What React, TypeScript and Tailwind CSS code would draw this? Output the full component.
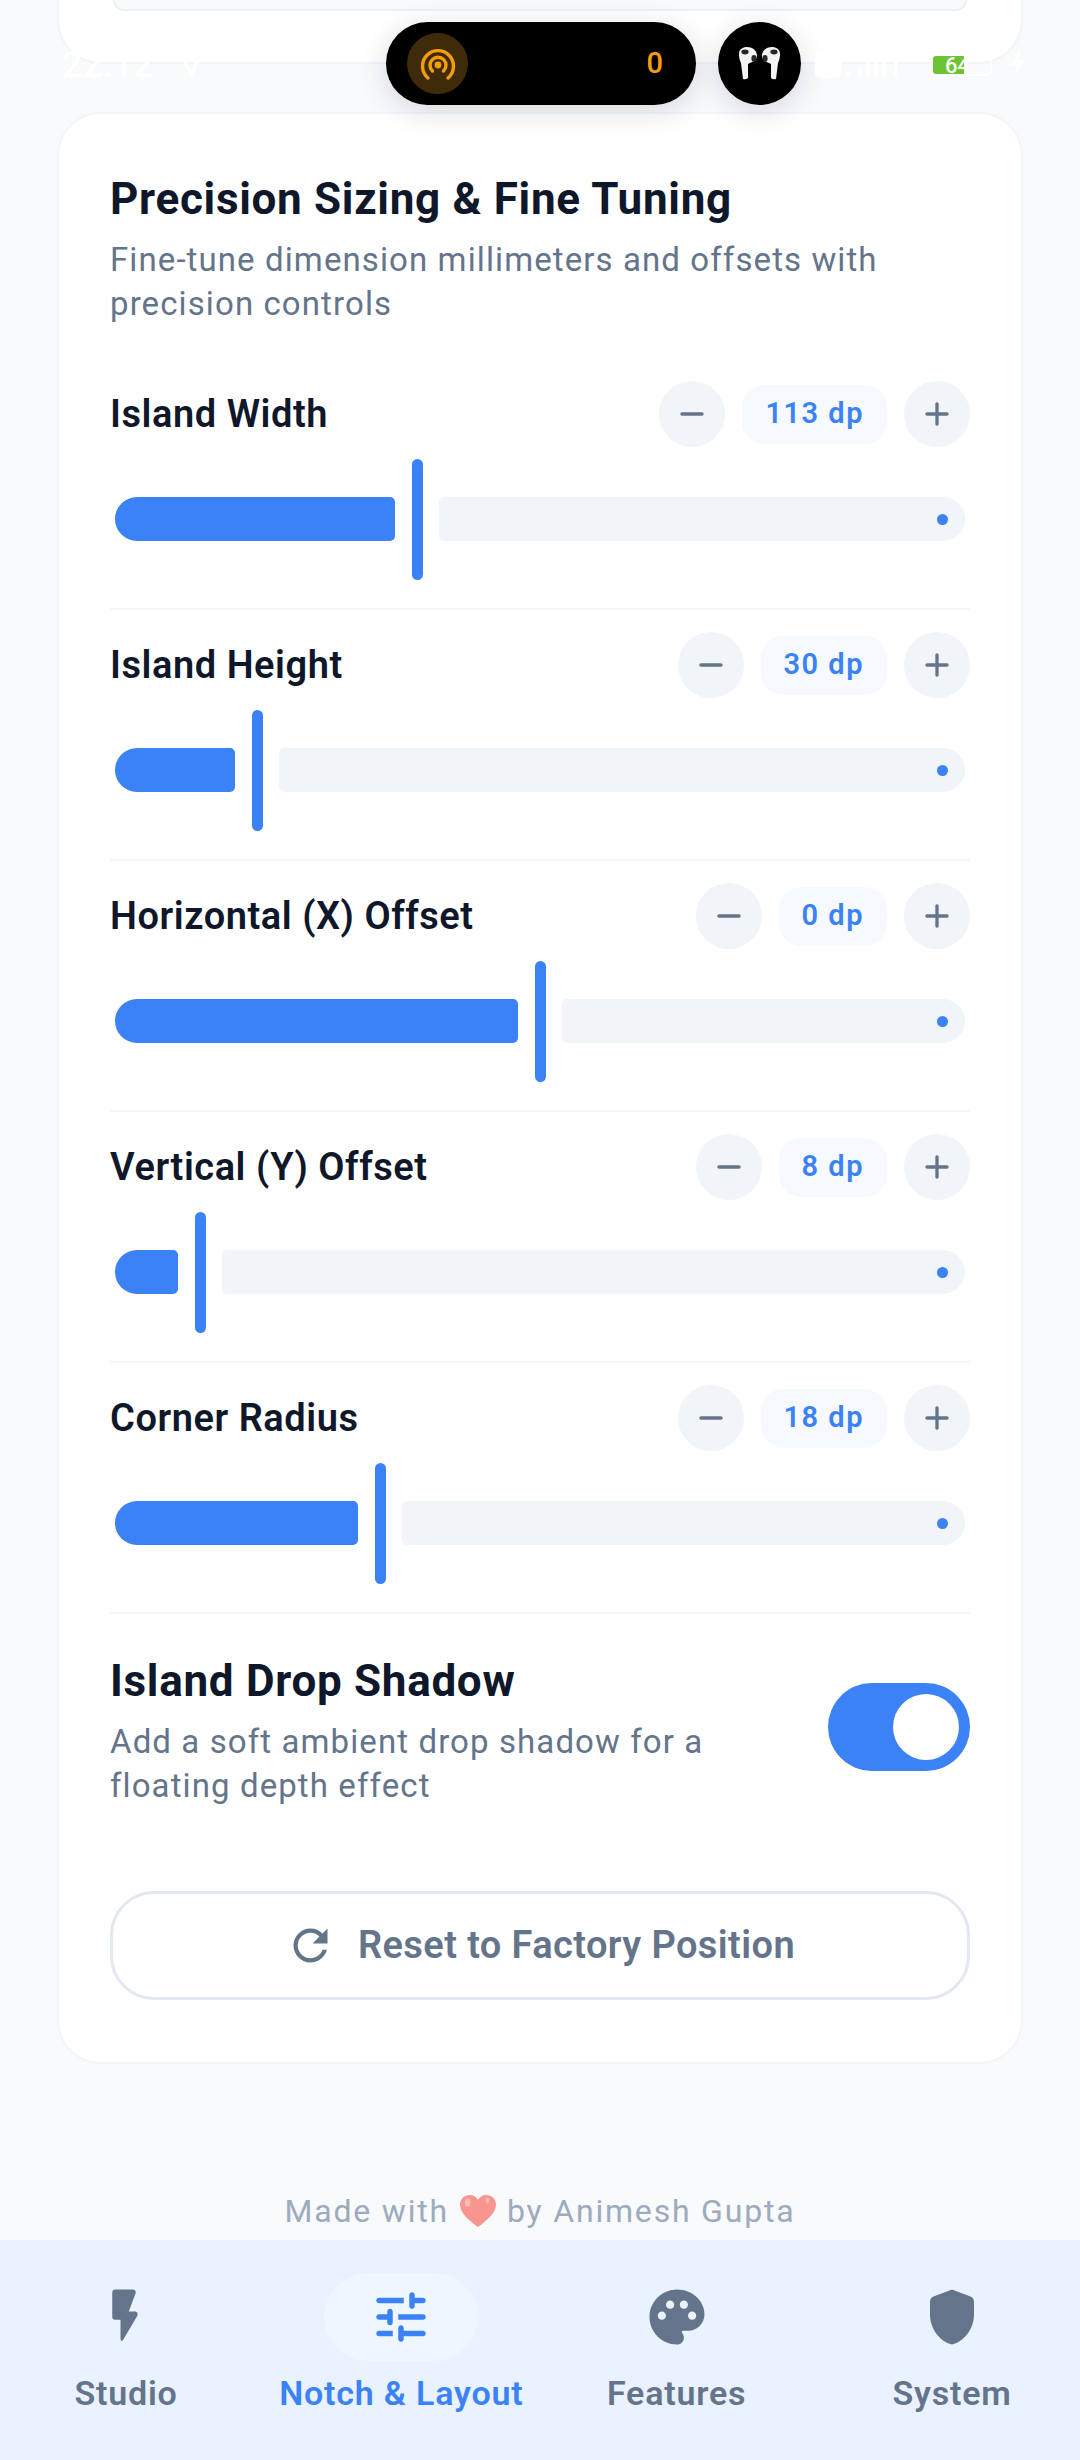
const font = "font-['Roboto',sans-serif]";

type Row = { label: string; value: string; fill: string };

const rows: Row[] = [
  { label: 'Island Width', value: '113 dp', fill: 'w-[280px]' },
  { label: 'Island Height', value: '30 dp', fill: 'w-[120px]' },
  { label: 'Horizontal (X) Offset', value: '0 dp', fill: 'w-[403px]' },
  { label: 'Vertical (Y) Offset', value: '8 dp', fill: 'w-[63px]' },
  { label: 'Corner Radius', value: '18 dp', fill: 'w-[243px]' },
];

const Icon = ({ d, className }: { d: string; className: string }) => (
  <svg viewBox="0 0 24 24" fill="currentColor" className={className}>
    <path d={d} />
  </svg>
);

const paths = {
  minus: 'M18 13H6c-.55 0-1-.45-1-1s.45-1 1-1h12c.55 0 1 .45 1 1s-.45 1-1 1z',
  plus: 'M18 13h-5v5c0 .55-.45 1-1 1s-1-.45-1-1v-5H6c-.55 0-1-.45-1-1s.45-1 1-1h5V6c0-.55.45-1 1-1s1 .45 1 1v5h5c.55 0 1 .45 1 1s-.45 1-1 1z',
  refresh:
    'M17.65 6.35C16.2 4.9 14.21 4 12 4c-4.42 0-7.99 3.58-7.99 8s3.57 8 7.99 8c3.73 0 6.84-2.55 7.73-6h-2.08c-.82 2.33-3.04 4-5.65 4-3.31 0-6-2.69-6-6s2.69-6 6-6c1.66 0 3.14.69 4.22 1.78L13 11h7V4l-2.35 2.35z',
  bolt: 'M7 3v9c0 .55.45 1 1 1h2v7.15c0 .51.67.69.93.25l5.19-8.9c.39-.67-.09-1.5-.86-1.5H13l2.49-6.65c.25-.65-.23-1.35-.93-1.35H8c-.55 0-1 .45-1 1z',
  tune: 'M3 18c0 .55.45 1 1 1h5v-2H4c-.55 0-1 .45-1 1zM3 6c0 .55.45 1 1 1h9V5H4c-.55 0-1 .45-1 1zm10 14v-1h7c.55 0 1-.45 1-1s-.45-1-1-1h-7v-1c0-.55-.45-1-1-1s-1 .45-1 1v4c0 .55.45 1 1 1s1-.45 1-1zM7 10v1H4c-.55 0-1 .45-1 1s.45 1 1 1h3v1c0 .55.45 1 1 1s1-.45 1-1v-4c0-.55-.45-1-1-1s-1 .45-1 1zm14 2c0-.55-.45-1-1-1h-9v2h9c.55 0 1-.45 1-1zm-5-3c.55 0 1-.45 1-1V7h3c.55 0 1-.45 1-1s-.45-1-1-1h-3V4c0-.55-.45-1-1-1s-1 .45-1 1v4c0 .55.45 1 1 1z',
  palette:
    'M12 2C6.49 2 2 6.49 2 12s4.49 10 10 10c1.38 0 2.5-1.12 2.5-2.5 0-.61-.23-1.2-.64-1.67-.08-.1-.13-.21-.13-.33 0-.28.22-.5.5-.5H16c3.31 0 6-2.69 6-6 0-4.96-4.49-9-10-9zm5.5 11c-.83 0-1.5-.67-1.5-1.5s.67-1.5 1.5-1.5 1.5.67 1.5 1.5-.67 1.5-1.5 1.5zm-3-4c-.83 0-1.5-.67-1.5-1.5S13.67 6 14.5 6s1.5.67 1.5 1.5S15.33 9 14.5 9zM5 11.5c0-.83.67-1.5 1.5-1.5S8 10.67 8 11.5 7.33 13 6.5 13 5 12.33 5 11.5zm6-4c0 .83-.67 1.5-1.5 1.5S8 8.33 8 7.5 8.67 6 9.5 6s1.5.67 1.5 1.5z',
  shield:
    'M11.3 2.26l-6 2.25C4.52 4.81 4 5.55 4 6.39v4.71c0 5.05 3.41 9.76 8 10.91 4.59-1.15 8-5.86 8-10.91V6.39c0-.83-.52-1.58-1.3-1.87l-6-2.25c-.45-.18-.95-.18-1.4-.01z',
};

const tabs = [
  { label: 'Studio', d: paths.bolt },
  { label: 'Notch & Layout', d: paths.tune, active: true },
  { label: 'Features', d: paths.palette },
  { label: 'System', d: paths.shield },
];

const SliderRow = ({ label, value, fill }: Row) => (
  <div className="border-b-2 border-[#f5f7fa] pt-[22px] pb-[28px]">
    <div className="flex items-center justify-between">
      <span className="text-[38px] font-semibold leading-none tracking-[0.55px] text-[#0f172a]">{label}</span>
      <div className="flex items-center gap-[17px]">
        <div className="flex h-[66px] w-[66px] items-center justify-center rounded-full bg-[#f1f5f9] text-[#64748b]">
          <Icon d={paths.minus} className="h-[40px] w-[40px]" />
        </div>
        <div className="flex h-[59px] items-center rounded-[22px] bg-[#f6faff] px-[23px] text-[29px] font-semibold tracking-[1.5px] text-[#3b82f6]">
          {value}
        </div>
        <div className="flex h-[66px] w-[66px] items-center justify-center rounded-full bg-[#f1f5f9] text-[#64748b]">
          <Icon d={paths.plus} className="h-[40px] w-[40px]" />
        </div>
      </div>
    </div>
    <div className="mt-[12px] flex h-[121px] items-start px-[5px]">
      <div className={`mt-[38px] h-[44px] shrink-0 rounded-l-[22px] rounded-r-[5px] bg-[#3b82f6] ${fill}`} />
      <div className="mx-[16.5px] h-[121px] w-[11px] shrink-0 rounded-full bg-[#3b82f6]" />
      <div className="mt-[38px] flex h-[44px] flex-1 items-center justify-end rounded-l-[5px] rounded-r-[22px] bg-[#f1f5f9] pr-[17px]">
        <div className="h-[11px] w-[11px] rounded-full bg-[#3b82f6]" />
      </div>
    </div>
  </div>
);

const StatusBar = () => (
  <div className="absolute inset-x-0 top-0 h-[110px]">
    <div className="absolute left-[62px] top-[44px] flex items-center gap-[26px] text-[36px] font-medium leading-[42px] text-white">
      22:12
      <svg viewBox="0 0 24 24" className="h-[26px] w-[24px]" fill="none" stroke="white" strokeWidth="3">
        <path d="M3 3 L12 22 L21 3" />
      </svg>
    </div>
    <div className="absolute left-[386px] top-[22px] flex h-[83px] w-[310px] items-center justify-between rounded-full bg-black pl-[21px] pr-[33px] shadow-[0_6px_30px_rgba(15,23,42,0.14)]">
      <div className="flex h-[61px] w-[61px] items-center justify-center rounded-full bg-[#3f2b0a]">
        <svg viewBox="0 0 36 34" className="h-[34px] w-[36px]" fill="none" stroke="#f59e0b" strokeWidth="3.4" strokeLinecap="round">
          <path d="M8 31 A15.5 15.5 0 1 1 28 31" />
          <path d="M12.5 24 A8 8 0 1 1 23.5 24" />
          <circle cx="18" cy="18" r="3.4" fill="#f59e0b" stroke="none" />
        </svg>
      </div>
      <span className="text-[29px] font-medium leading-none text-[#f59e0b]">0</span>
    </div>
    <div className="absolute left-[718px] top-[22px] flex h-[83px] w-[83px] items-center justify-center rounded-full bg-black shadow-[0_6px_30px_rgba(15,23,42,0.14)]">
      <svg viewBox="0 0 43 33" className="h-[33px] w-[43px]">
        <path d="M1 7 C1 2 5 0 9 0 C14 0 19 3 19 9 C19 13 15 15 12 16 L10 17 L10 31 Q8 33 5 32 L3 16 C1.5 13 1 10 1 7 Z" fill="#f4f4f5" />
        <path d="M42 7 C42 2 38 0 34 0 C29 0 24 3 24 9 C24 13 28 15 31 16 L33 17 L33 31 Q35 33 38 32 L40 16 C41.5 13 42 10 42 7 Z" fill="#f4f4f5" />
        <ellipse cx="7" cy="5" rx="3.6" ry="2.4" fill="#27272a" />
        <ellipse cx="36" cy="5" rx="3.6" ry="2.4" fill="#27272a" />
        <ellipse cx="16" cy="11.5" rx="2.6" ry="3.4" fill="#27272a" />
        <ellipse cx="27" cy="11.5" rx="2.6" ry="3.4" fill="#27272a" />
      </svg>
    </div>
    <svg viewBox="0 0 150 32" className="absolute left-[810px] top-[48px] h-[32px] w-[150px]" fill="white">
      <rect x="5" y="4" width="26" height="26" rx="5" />
      <rect x="36" y="24" width="4" height="5" />
      <rect x="48" y="20" width="4" height="9" />
      <rect x="56" y="14" width="4" height="15" />
      <rect x="64" y="8" width="4" height="21" />
      <rect x="72" y="8" width="4" height="21" />
      <rect x="84" y="12" width="3" height="17" />
    </svg>
    <div className="absolute left-[932px] top-[54px] flex h-[22px] w-[60px] rounded-[5px] border-2 border-white">
      <div className="-mx-px w-[31px] rounded-l-[3px] bg-[#6cc433] pl-[12px] text-[22px] font-medium leading-[20px] text-white">
        64
      </div>
    </div>
    <svg viewBox="0 0 16 26" className="absolute left-[1010px] top-[50px] h-[26px] w-[16px]" fill="white">
      <path d="M10 0 L1 15 H7 L5 26 L15 10 H9 Z" />
    </svg>
  </div>
);

export default function App() {
  return (
    <div className={`relative flex h-[2460px] w-[1080px] flex-col overflow-hidden bg-[#f8fafc] ${font}`}>
      <main className="flex-1 px-[57px]">
        <div className="flex h-[64px] justify-center rounded-b-[44px] border-x-2 border-b-2 border-[#f2f5f9] bg-white">
          <div className="h-[11px] w-[854px] rounded-b-[30px] border-x-2 border-b-2 border-[#eef2f7] bg-[#f8fafc]" />
        </div>

        <section className="mt-[48px] rounded-[44px] border-2 border-[#f2f5f9] bg-white px-[51px] pt-[56px] pb-[62px]">
          <h2 className="text-[44px] font-bold leading-[58px] tracking-[0.7px] text-[#0f172a]">Precision Sizing &amp; Fine Tuning</h2>
          <p className="mt-[10px] mb-[33px] text-[33px] leading-[44px] tracking-[1.1px] text-[#64748b]">
            Fine-tune dimension millimeters and offsets with precision controls
          </p>

          {rows.map((row) => (
            <SliderRow key={row.label} {...row} />
          ))}

          <div className="flex items-start justify-between pt-[39px]">
            <div className="w-[660px]">
              <h3 className="text-[44px] font-bold leading-[56px] tracking-[0.7px] text-[#0f172a]">Island Drop Shadow</h3>
              <p className="mt-[11px] text-[33px] leading-[44px] tracking-[1.1px] text-[#64748b]">
                Add a soft ambient drop shadow for a floating depth effect
              </p>
            </div>
            <div className="mt-[30px] flex h-[88px] w-[142px] items-center justify-end rounded-full bg-[#3b82f6] pr-[11px]">
              <div className="h-[66px] w-[66px] rounded-full bg-white" />
            </div>
          </div>

          <button className="mt-[83px] flex h-[109px] w-full items-center justify-center gap-[22px] rounded-[44px] border-[3px] border-[#e2e8f0] bg-white text-[38px] font-semibold tracking-[0.4px] text-[#64748b]">
            <Icon d={paths.refresh} className="h-[51px] w-[51px]" />
            Reset to Factory Position
          </button>
        </section>

        <p className="mt-[125px] flex items-center justify-center gap-[10px] text-[32px] leading-[44px] tracking-[1.8px] text-[#94a3b8] opacity-90">
          Made with
          <svg viewBox="0 0 40 36" className="h-[34px] w-[38px]">
            <path d="M20 35 C8 26 1 19 1 11 C1 5 6 1 11 1 C15 1 18 3 20 6 C22 3 25 1 29 1 C34 1 39 5 39 11 C39 19 32 26 20 35 Z" fill="#f98b83" />
            <ellipse cx="9" cy="9" rx="3" ry="4.5" fill="#fbb4ae" />
            <ellipse cx="30" cy="7" rx="2" ry="3" fill="#fbb4ae" />
          </svg>
          by Animesh Gupta
        </p>
      </main>

      <nav className="flex h-[220px] shrink-0 justify-between bg-[#e9f2fe] pt-[33px] pr-[38px] pl-[36px]">
        {tabs.map((tab) => (
          <div key={tab.label} className="flex w-[180px] flex-col items-center">
            <div
              className={`flex h-[88px] w-[154px] items-center justify-center rounded-full ${tab.active ? 'bg-[#eff6ff] text-[#3b82f6]' : 'text-[#64748b]'}`}
            >
              <Icon d={tab.d} className="h-[66px] w-[66px]" />
            </div>
            <span
              className={`mt-[10px] whitespace-nowrap text-[34px] font-semibold leading-[44px] tracking-[0.8px] ${tab.active ? 'text-[#3b82f6]' : 'text-[#64748b]'}`}
            >
              {tab.label}
            </span>
          </div>
        ))}
      </nav>

      <StatusBar />
    </div>
  );
}
